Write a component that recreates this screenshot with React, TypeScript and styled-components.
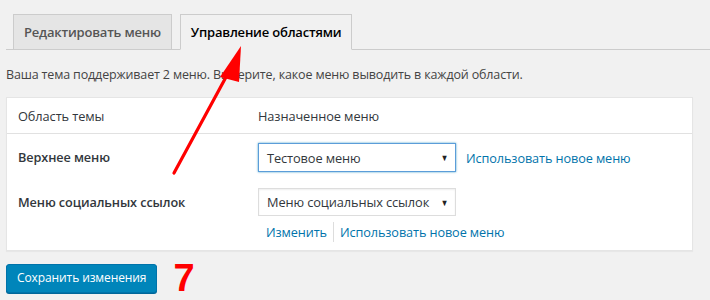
import React from "react";
import styled, { createGlobalStyle } from "styled-components";

const GlobalStyle = createGlobalStyle`
  html, body {
    margin: 0;
    padding: 0;
    background: #f1f1f1;
  }
  body {
    font-family: "Open Sans", "Noto Sans", sans-serif;
    color: #444;
  }
  * { box-sizing: border-box; }
`;

interface locationInterface {
  label: string,
  menu: string,
  focused: boolean,
  links: string[],
  inline: boolean,
}

const locations: locationInterface[] = [
  { label: "Верхнее меню", menu: "Тестовое меню", focused: true, links: ["Использовать новое меню"], inline: true },
  { label: "Меню социальных ссылок", menu: "Меню социальных ссылок", focused: false, links: ["Изменить", "Использовать новое меню"], inline: false },
];

const App = () => {
  return (
    <Page>
      <GlobalStyle />
      <Tabs>
        <Tab>Редактировать меню</Tab>
        <Tab $active>Управление областями</Tab>
      </Tabs>
      <Description>
        Ваша тема поддерживает 2 меню. Выберите, какое меню выводить в каждой области.
      </Description>
      <Table>
        <HeadRow>
          <HeadCell>Область темы</HeadCell>
          <HeadCell>Назначенное меню</HeadCell>
        </HeadRow>
        {locations.map((loc, i) => (
          <Row key={i} $first={i === 0}>
            <Label>{loc.label}</Label>
            <MenuCell $inline={loc.inline}>
              <Select $focused={loc.focused}>
                <span>{loc.menu}</span>
                <Caret>▼</Caret>
              </Select>
              <Links>
                {loc.links.map((link, j) => (
                  <LinkItem key={j} $divider={j > 0}>{link}</LinkItem>
                ))}
              </Links>
            </MenuCell>
          </Row>
        ))}
      </Table>
      <Footer>
        <SaveButton>Сохранить изменения</SaveButton>
        <StepNumber>7</StepNumber>
      </Footer>
      <Arrow width="710" height="300" viewBox="0 0 710 300">
        <line x1="174" y1="173" x2="232" y2="66" stroke="#ff0000" strokeWidth="3.2" strokeLinecap="round" />
        <polygon points="241,46 220,77 239,82" fill="#ff0000" />
      </Arrow>
    </Page>
  );
};

const Page = styled.div`
  position: relative;
  width: 710px;
  height: 300px;
  padding: 14px 17px 0 6px;
  overflow: hidden;
`;

const Tabs = styled.div`
  display: flex;
  gap: 8px;
  padding-left: 7px;
  border-bottom: 1px solid #ccc;
  margin-right: -17px;
`;

const Tab = styled.div<{ $active?: boolean }>`
  height: 36px;
  margin-bottom: -1px;
  padding: 0 10px;
  display: flex;
  align-items: center;
  border: 1px solid #ccc;
  border-bottom-color: ${(p) => (p.$active ? "#f1f1f1" : "#ccc")};
  background: ${(p) => (p.$active ? "#f1f1f1" : "#e5e5e5")};
  color: ${(p) => (p.$active ? "#000" : "#555")};
  font-size: 13px;
  font-weight: 600;
  letter-spacing: -0.2px;
  white-space: nowrap;
`;

const Description = styled.p`
  margin: 15px 0 12px;
  font-size: 12.5px;
  line-height: 20px;
  color: #444;
  letter-spacing: -0.15px;
`;

const Table = styled.div`
  background: #fff;
  border: 1px solid #e5e5e5;
  box-shadow: 0 1px 1px rgba(0, 0, 0, 0.04);
  padding-bottom: 8px;
`;

const HeadRow = styled.div`
  display: grid;
  grid-template-columns: 240px 1fr;
  height: 36px;
  align-items: center;
  padding-left: 11px;
  border-bottom: 1px solid #e1e1e1;
`;

const HeadCell = styled.div`
  font-size: 12.8px;
  color: #32373c;
  letter-spacing: -0.1px;
`;

const Row = styled.div<{ $first: boolean }>`
  display: grid;
  grid-template-columns: 240px 1fr;
  padding-left: 11px;
  padding-top: ${(p) => (p.$first ? "9px" : "16px")};
`;

const Label = styled.div`
  font-size: 12.7px;
  font-weight: 600;
  color: #32373c;
  letter-spacing: -0.1px;
  height: 28px;
  display: flex;
  align-items: center;
`;

const MenuCell = styled.div<{ $inline: boolean }>`
  display: flex;
  flex-direction: ${(p) => (p.$inline ? "row" : "column")};
  align-items: ${(p) => (p.$inline ? "center" : "flex-start")};
  gap: ${(p) => (p.$inline ? "2px" : "6px")};
`;

const Select = styled.div<{ $focused: boolean }>`
  width: 198px;
  height: ${(p) => (p.$focused ? "29px" : "28px")};
  display: flex;
  align-items: center;
  justify-content: space-between;
  padding: 0 6px 0 8px;
  background: #fff;
  border: 1px solid ${(p) => (p.$focused ? "#5b9dd9" : "#ddd")};
  box-shadow: ${(p) => (p.$focused ? "0 0 2px rgba(30, 140, 190, 0.8)" : "inset 0 1px 2px rgba(0, 0, 0, 0.07)")};
  font-size: 12.8px;
  color: #32373c;
  letter-spacing: -0.1px;
  white-space: nowrap;
`;

const Caret = styled.span`
  font-size: 9px;
  color: #222;
  margin-left: 4px;
  transform: scaleX(0.85);
`;

const Links = styled.div`
  display: flex;
  align-items: center;
  padding-left: 8px;
`;

const LinkItem = styled.span<{ $divider: boolean }>`
  font-size: 12.7px;
  color: #0073aa;
  letter-spacing: -0.1px;
  line-height: 20px;
  ${(p) => p.$divider && `
    border-left: 1px solid #ddd;
    margin-left: 6px;
    padding-left: 6px;
  `}
`;

const Footer = styled.div`
  display: flex;
  align-items: center;
  gap: 16px;
  margin-top: 12px;
`;

const SaveButton = styled.button`
  height: 29px;
  padding: 0 10px 1px;
  background: #0085ba;
  border: 1px solid #0073aa;
  border-radius: 3px;
  box-shadow: 0 1px 0 #006799;
  color: #fff;
  font-family: "Open Sans", "Noto Sans", sans-serif;
  font-size: 12px;
  letter-spacing: -0.1px;
  white-space: nowrap;
  cursor: pointer;
`;

const StepNumber = styled.span`
  font-family: "Liberation Sans", Arial, sans-serif;
  font-size: 38px;
  font-weight: 700;
  color: #ff0000;
  line-height: 30px;
`;

const Arrow = styled.svg`
  position: absolute;
  left: 0;
  top: 0;
  pointer-events: none;
`;

export default App;
